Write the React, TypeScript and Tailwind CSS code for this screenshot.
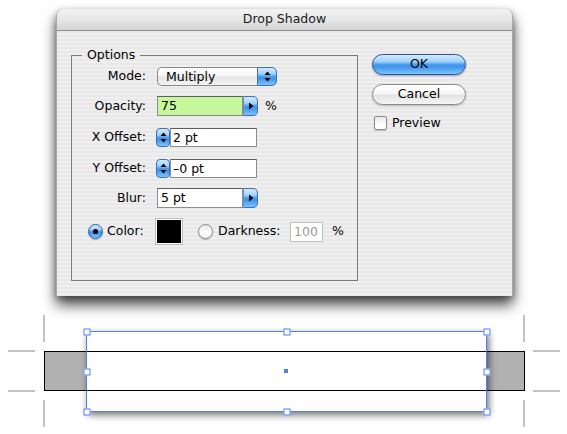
import React from "react";

const aqua =
  "bg-[linear-gradient(180deg,#d3ebff_0%,#9fd0fb_35%,#4a9cf0_50%,#3f93ec_62%,#7cc6fb_100%)]";
const glass =
  "bg-[linear-gradient(180deg,#ffffff_0%,#f6f6f6_45%,#e4e4e4_55%,#f4f4f4_100%)]";

const UpDown = () => (
  <svg width="7" height="11" viewBox="0 0 7 11">
    <path d="M3.5 0.5 L6.5 4 L0.5 4 Z" fill="#000" />
    <path d="M3.5 10.5 L6.5 7 L0.5 7 Z" fill="#000" />
  </svg>
);

const RightArrow = () => (
  <svg width="6" height="8" viewBox="0 0 6 8">
    <path d="M1 0.5 L5.5 4 L1 7.5 Z" fill="#000" />
  </svg>
);

const Label = ({ text }: { text: string }) => (
  <div className="w-[74px] text-right pr-0 text-black">{text}</div>
);

// text field with a little arrow popup button on its right
const ComboField = ({ value, green }: { value: string; green?: boolean }) => (
  <div className="flex h-5 ml-px">
    <div
      className={`w-[86px] h-5 border border-[#8c8c8c] border-t-[#5e5e5e] pl-[3px] leading-[18px] ${
        green ? "bg-[#c6f79a]" : "bg-white"
      }`}
    >
      {value}
    </div>
    <div
      className={`w-[15px] h-5 rounded-r-[5px] border border-[#3c6fb8] border-l-[#6a8fc4] flex items-center justify-center ${aqua}`}
    >
      <RightArrow />
    </div>
  </div>
);

const StepField = ({ value }: { value: string }) => (
  <div className="flex h-[19px]">
    <div
      className={`w-[14px] h-[19px] rounded-[4px] border border-[#3c6fb8] flex items-center justify-center ${aqua}`}
    >
      <UpDown />
    </div>
    <div className="w-[87px] h-[19px] border border-[#8c8c8c] border-t-[#5e5e5e] bg-white pl-[2px] leading-[17px]">
      {value}
    </div>
  </div>
);

const Radio = ({ on }: { on?: boolean }) => (
  <div
    className={`w-[15px] h-[15px] rounded-full border flex items-center justify-center shadow-[0_1px_1px_rgba(0,0,0,0.25)] ${
      on
        ? `border-[#2d5fa8] ${aqua}`
        : "border-[#8a8a8a] bg-[linear-gradient(180deg,#e6e6e6_0%,#ffffff_60%,#f0f0f0_100%)]"
    }`}
  >
    {on && <div className="w-[5px] h-[5px] rounded-full bg-black" />}
  </div>
);

export default function App() {
  const handle =
    "absolute w-[7px] h-[7px] bg-white border border-[#4f7ff5] -translate-x-1/2 -translate-y-1/2";
  return (
    <div
      className="relative w-[567px] h-[434px] bg-white overflow-hidden text-[12.5px] text-black"
      style={{ fontFamily: '"DejaVu Sans", "Liberation Sans", sans-serif' }}
    >
      {/* dialog */}
      <div className="ml-[56px] pt-[9px]">
        <div className="relative w-[457px] h-[287px] rounded-t-[7px] border-x border-[#a8a8a8] shadow-[0_9px_14px_rgba(0,0,0,0.7),0_2px_6px_rgba(0,0,0,0.3)] bg-[repeating-linear-gradient(180deg,#efefef_0px,#efefef_2px,#e8e8e8_2px,#e8e8e8_4px)] flex flex-col">
          <div className="h-[22px] rounded-t-[7px] border-b border-[#8e8e8e] bg-[linear-gradient(180deg,#f3f3f3_0%,#e6e6e6_50%,#d4d4d4_100%)] flex items-center justify-center text-[12.5px] leading-none text-[#1a1a1a]">
            Drop Shadow
          </div>
          <div className="flex pl-[14px] pt-4">
            <fieldset className="w-[287px] h-[234px] border border-[#7c7c7c]">
              <legend className="ml-[10px] px-[5px] leading-4">Options</legend>
              <div className="pt-[3px] flex flex-col">
                <div className="flex items-center h-5 gap-[10px]">
                  <Label text="Mode:" />
                  <div className="flex h-[19px] ml-px">
                    <div
                      className={`w-[100px] h-[19px] rounded-l-[5px] border border-[#888] border-r-0 pl-[8px] leading-[17px] ${glass}`}
                    >
                      Multiply
                    </div>
                    <div
                      className={`w-[20px] h-[19px] rounded-r-[5px] border border-[#3c6fb8] flex items-center justify-center ${aqua}`}
                    >
                      <UpDown />
                    </div>
                  </div>
                </div>
                <div className="flex items-center h-5 gap-[10px] mt-[10px]">
                  <Label text="Opacity:" />
                  <ComboField value="75" green />
                  <span className="ml-[-3px]">%</span>
                </div>
                <div className="flex items-center h-5 gap-[10px] mt-[11px]">
                  <Label text="X Offset:" />
                  <StepField value="2 pt" />
                </div>
                <div className="flex items-center h-5 gap-[10px] mt-[11px]">
                  <Label text="Y Offset:" />
                  <StepField value="–0 pt" />
                </div>
                <div className="flex items-center h-5 gap-[10px] mt-[10px]">
                  <Label text="Blur:" />
                  <ComboField value="5 pt" />
                </div>
                <div className="flex items-center h-[25px] mt-[11px] pl-4">
                  <Radio on />
                  <span className="ml-[4px] w-[49px]">Color:</span>
                  <div className="w-[26px] h-[25px] bg-black border border-white outline outline-1 outline-[#bdbdbd]" />
                  <div className="ml-4">
                    <Radio />
                  </div>
                  <span className="ml-[5px] w-[72px]">Darkness:</span>
                  <div className="w-[33px] h-5 border border-[#bcbcbc] bg-white text-[#9a9a9a] pl-[3px] leading-[18px]">
                    100
                  </div>
                  <span className="ml-[9px]">%</span>
                </div>
              </div>
            </fieldset>
            <div className="ml-[14px] pt-[7px] flex flex-col">
              <div
                className={`w-[94px] h-[21px] rounded-full border border-[#2f4fa6] shadow-[0_1px_2px_rgba(0,0,0,0.3)] flex items-center justify-center leading-none ${aqua}`}
              >
                OK
              </div>
              <div
                className={`w-[94px] h-[21px] mt-[9px] rounded-full border border-[#8a8a8a] shadow-[0_1px_2px_rgba(0,0,0,0.25)] flex items-center justify-center leading-none ${glass}`}
              >
                Cancel
              </div>
              <div className="flex items-center mt-[9px] ml-[2px]">
                <div className="w-[13px] h-[14px] rounded-[2px] border border-[#8a8a8a] bg-[linear-gradient(180deg,#e8e8e8_0%,#ffffff_70%)] shadow-[0_1px_1px_rgba(0,0,0,0.2)]" />
                <span className="ml-[5px]">Preview</span>
              </div>
            </div>
          </div>
        </div>
      </div>

      {/* artboard preview */}
      <div className="absolute left-0 top-0 w-full h-full pointer-events-none">
        {/* crop marks */}
        <div className="absolute left-[43px] top-[315px] w-[2px] h-[27px] bg-[#c3c3c3]" />
        <div className="absolute left-[43px] top-[400px] w-[2px] h-[27px] bg-[#c3c3c3]" />
        <div className="absolute left-[523px] top-[315px] w-[2px] h-[27px] bg-[#c3c3c3]" />
        <div className="absolute left-[523px] top-[400px] w-[2px] h-[27px] bg-[#c3c3c3]" />
        <div className="absolute left-[8px] top-[350px] w-[27px] h-[2px] bg-[#c3c3c3]" />
        <div className="absolute left-[8px] top-[390px] w-[27px] h-[2px] bg-[#c3c3c3]" />
        <div className="absolute left-[533px] top-[350px] w-[27px] h-[2px] bg-[#c3c3c3]" />
        <div className="absolute left-[533px] top-[390px] w-[27px] h-[2px] bg-[#c3c3c3]" />

        {/* gray bar */}
        <div className="absolute left-[44px] top-[351px] w-[481px] h-[40px] bg-[#b1b1b1] border border-black" />
        {/* white object with drop shadow */}
        <div className="absolute left-[86px] top-[331px] w-[401px] h-[81px] bg-white shadow-[2px_3px_7px_rgba(0,0,0,0.55)]" />
        <div className="absolute left-[86px] top-[351px] w-[401px] h-px bg-black" />
        <div className="absolute left-[86px] top-[390px] w-[401px] h-px bg-black" />
        {/* selection */}
        <div className="absolute left-[86px] top-[331px] w-[401px] h-[81px] border border-[#4f7ff5]" />
        <div className={handle} style={{ left: 86.5, top: 331.5 }} />
        <div className={handle} style={{ left: 286.5, top: 331.5 }} />
        <div className={handle} style={{ left: 486.5, top: 331.5 }} />
        <div className={handle} style={{ left: 86.5, top: 371.5 }} />
        <div className={handle} style={{ left: 486.5, top: 371.5 }} />
        <div className={handle} style={{ left: 86.5, top: 411.5 }} />
        <div className={handle} style={{ left: 286.5, top: 411.5 }} />
        <div className={handle} style={{ left: 486.5, top: 411.5 }} />
        <div className="absolute left-[284px] top-[369px] w-[4px] h-[4px] bg-[#4f7ff5]" />
      </div>
    </div>
  );
}
